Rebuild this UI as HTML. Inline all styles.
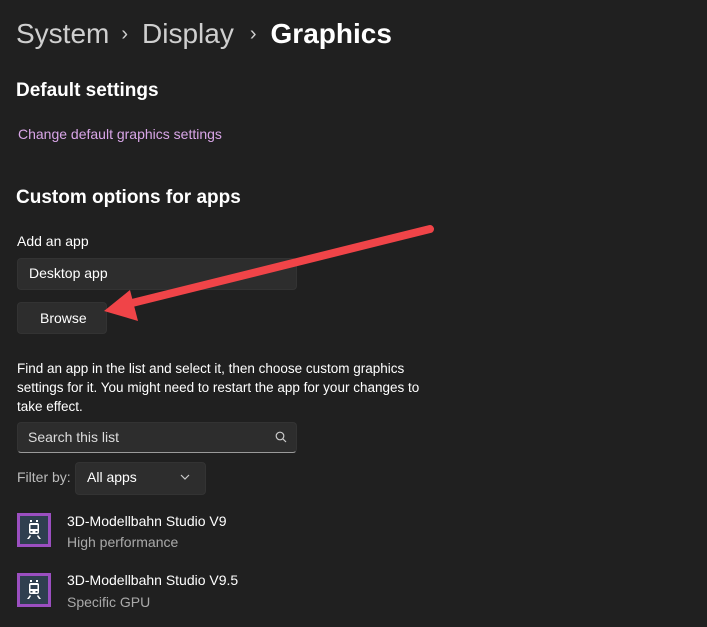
<!DOCTYPE html>
<html><head><meta charset="utf-8"><style>
body{margin:0;width:707px;height:627px;background:#202020;font-family:"Segoe UI","Liberation Sans",sans-serif;color:#fff;position:relative;overflow:hidden}
.a{position:absolute;white-space:nowrap}
.box{position:absolute;background:#2d2d2d;border-radius:4px;border:1px solid #333}
.ic{position:absolute;left:17px;width:34px;height:34px;box-sizing:border-box;border:3px solid #9b4fc0;background:#2f3f4f}
</style></head><body>
<div class="a" style="left:16px;top:18px;font-size:28px;"><span style="color:#cfcfcf">System</span><span style="color:#cfcfcf;font-size:20px;margin:0 14px 0 12px;position:relative;top:-3px">›</span><span style="color:#cfcfcf">Display</span><span style="color:#cfcfcf;font-size:20px;margin:0 14px 0 16px;position:relative;top:-3px">›</span><span style="font-weight:bold">Graphics</span></div>
<div class="a" style="left:16px;top:80px;font-size:19px;font-weight:bold">Default settings</div>
<div class="a" style="left:18px;top:126px;font-size:14px;color:#d9a6e8">Change default graphics settings</div>
<div class="a" style="left:16px;top:187px;font-size:19px;font-weight:bold">Custom options for apps</div>
<div class="a" style="left:17px;top:233px;font-size:14px">Add an app</div>
<div class="box" style="left:17px;top:258px;width:278px;height:30px"></div>
<div class="a" style="left:29px;top:265px;font-size:14px">Desktop app</div>
<div class="box" style="left:17px;top:302px;width:88px;height:30px"></div>
<div class="a" style="left:40px;top:310px;font-size:14px">Browse</div>
<div class="a" style="left:17px;top:359px;font-size:13.5px;line-height:19px;white-space:normal;width:428px">Find an app in the list and select it, then choose custom graphics settings for it. You might need to restart the app for your changes to take effect.</div>
<div class="box" style="left:17px;top:422px;width:278px;height:29px;border-bottom:1px solid #9a9a9a"></div>
<div class="a" style="left:28px;top:429px;font-size:14px;color:#ddd">Search this list</div>
<svg class="a" style="left:275px;top:431px" width="12" height="12"><circle cx="5" cy="5" r="3.8" fill="none" stroke="#ccc" stroke-width="1.2"/><line x1="7.8" y1="7.8" x2="11" y2="11" stroke="#ccc" stroke-width="1.2"/></svg>
<div class="a" style="left:17px;top:469px;font-size:14px;color:#bbb">Filter by:</div>
<div class="box" style="left:75px;top:462px;width:129px;height:31px"></div>
<div class="a" style="left:87px;top:469px;font-size:14px">All apps</div>
<svg class="a" style="left:180px;top:474px" width="10" height="6"><path d="M1 1L5 5L9 1" fill="none" stroke="#ccc" stroke-width="1.2"/></svg>
<div class="ic" style="top:513px"><svg width="28" height="28" style="position:absolute;left:0;top:0"><g fill="#fff"><rect x="10" y="4" width="2" height="2"/><rect x="16" y="4" width="2" height="2"/><rect x="9" y="7" width="10" height="11" rx="2"/><path d="M10 19L7 23H9L11 20ZM18 19L21 23H19L17 20Z"/></g><rect x="10.5" y="9" width="7" height="4" fill="#2f3f4f"/><rect x="10.5" y="15" width="2" height="1.5" fill="#2f3f4f"/><rect x="15.5" y="15" width="2" height="1.5" fill="#2f3f4f"/></svg></div>
<div class="a" style="left:67px;top:513px;font-size:14px">3D-Modellbahn Studio V9</div>
<div class="a" style="left:67px;top:534px;font-size:14px;color:#aaa">High performance</div>
<div class="ic" style="top:573px"><svg width="28" height="28" style="position:absolute;left:0;top:0"><g fill="#fff"><rect x="10" y="4" width="2" height="2"/><rect x="16" y="4" width="2" height="2"/><rect x="9" y="7" width="10" height="11" rx="2"/><path d="M10 19L7 23H9L11 20ZM18 19L21 23H19L17 20Z"/></g><rect x="10.5" y="9" width="7" height="4" fill="#2f3f4f"/><rect x="10.5" y="15" width="2" height="1.5" fill="#2f3f4f"/><rect x="15.5" y="15" width="2" height="1.5" fill="#2f3f4f"/></svg></div>
<div class="a" style="left:67px;top:572px;font-size:14px">3D-Modellbahn Studio V9.5</div>
<div class="a" style="left:67px;top:594px;font-size:14px;color:#aaa">Specific GPU</div>
<svg class="a" style="left:0;top:0" width="707" height="627"><line x1="430" y1="229" x2="128" y2="304" stroke="#f04448" stroke-width="8" stroke-linecap="round"/><polygon points="104,311 130,290 138,321" fill="#f04448"/></svg>
</body></html>
